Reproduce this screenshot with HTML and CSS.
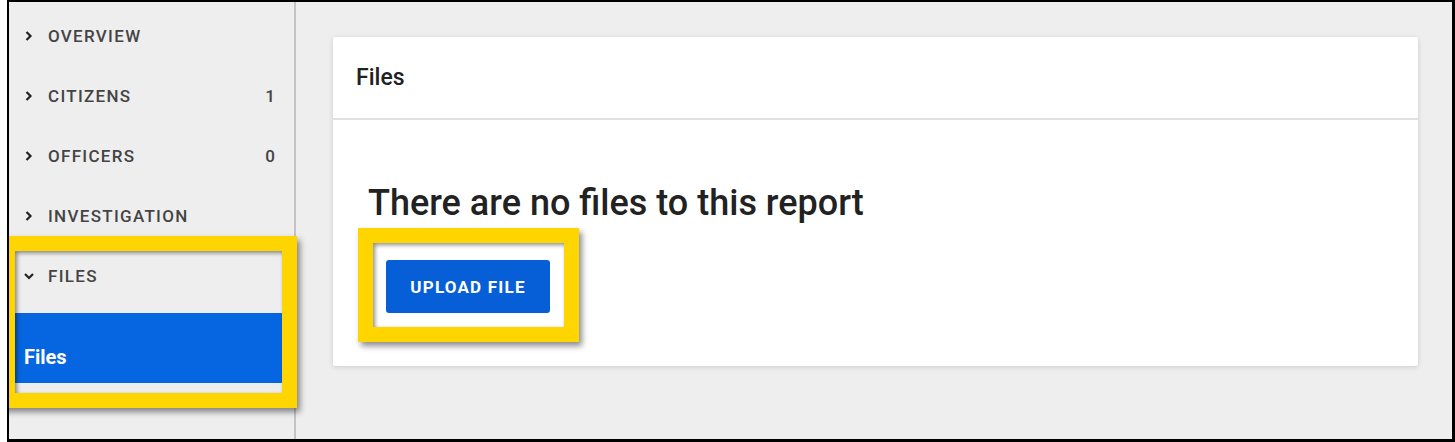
FILE: index.html
```html
<!DOCTYPE html>
<html>
<head>
    <title>Report Files</title>
    <link rel="stylesheet" href="styles.css">
</head>
<body>
    <div class="window">
        <div class="sidebar">
            <div class="nav-item">
                <svg class="chev" width="10" height="12" viewBox="0 0 10 12"><path d="M2.5 2L6.5 6L2.5 10" fill="none" stroke="#222" stroke-width="2.2"/></svg>
                <span class="nav-label">Overview</span>
            </div>
            <div class="nav-item">
                <svg class="chev" width="10" height="12" viewBox="0 0 10 12"><path d="M2.5 2L6.5 6L2.5 10" fill="none" stroke="#222" stroke-width="2.2"/></svg>
                <span class="nav-label">Citizens</span>
                <span class="nav-count">1</span>
            </div>
            <div class="nav-item">
                <svg class="chev" width="10" height="12" viewBox="0 0 10 12"><path d="M2.5 2L6.5 6L2.5 10" fill="none" stroke="#222" stroke-width="2.2"/></svg>
                <span class="nav-label">Officers</span>
                <span class="nav-count">0</span>
            </div>
            <div class="nav-item">
                <svg class="chev" width="10" height="12" viewBox="0 0 10 12"><path d="M2.5 2L6.5 6L2.5 10" fill="none" stroke="#222" stroke-width="2.2"/></svg>
                <span class="nav-label">Investigation</span>
            </div>
            <div class="nav-group">
                <div class="nav-item">
                    <svg class="chev" width="10" height="12" viewBox="0 0 10 12"><path d="M1 4L5 8L9 4" fill="none" stroke="#222" stroke-width="2.2"/></svg>
                    <span class="nav-label">Files</span>
                </div>
                <div class="sub-item active">Files</div>
                <!-- annotation highlight -->
                <div class="highlight side-mark"></div>
            </div>
        </div>

        <div class="main">
            <div class="card">
                <div class="card-header">Files</div>
                <div class="card-body">
                    <h2>There are no files to this report</h2>
                    <div class="upload-wrap">
                        <button type="button">Upload File</button>
                        <div class="highlight btn-mark"></div>
                    </div>
                </div>
            </div>
        </div>
    </div>
</body>
</html>
```
FILE: styles.css
```css
body {
    margin: 0;
    background: white;
    font-family: Roboto, "Liberation Sans", sans-serif;
}
.window {
    margin-left: 7px;
    height: 442px;
    box-sizing: border-box;
    border-style: solid;
    border-color: #000;
    border-width: 2px 3px 3px 2px;
    display: flex;
    background: #eeeeee;
    overflow: hidden;
}
.sidebar {
    width: 285px;
    border-right: 2px solid #c4c4c4;
    padding-top: 4px;
    flex-shrink: 0;
}
.nav-item {
    height: 60px;
    display: flex;
    align-items: center;
    padding: 0 19px 0 15px;
    color: #444;
    font-size: 17px;
    font-weight: 500;
    letter-spacing: 1.3px;
    text-transform: uppercase;
}
.chev {
    margin-right: 14px;
}
.nav-label {
    flex: 1;
}
.nav-count {
    letter-spacing: 0;
}
.nav-group {
    position: relative;
}
.sub-item {
    margin-top: 7px;
    padding: 32px 15px 14px;
    font-size: 20px;
    line-height: 24px;
    font-weight: 700;
}
.active {
    background: #0666e1;
    color: white;
}
.highlight {
    position: absolute;
    border: 15px solid #ffd500;
    box-shadow: 3px 4px 6px rgba(0,0,0,0.45), inset 2px 2px 4px rgba(0,0,0,0.45);
    pointer-events: none;
}
.side-mark {
    left: -9px;
    top: -10px;
    width: 267px;
    height: 142px;
}
.main {
    flex: 1;
    padding: 35px 34px 0 37px;
}
.card {
    background: white;
    border-radius: 2px;
    height: 329px;
    box-shadow: 0 1px 5px rgba(0,0,0,0.15);
}
.card-header {
    height: 83px;
    box-sizing: border-box;
    padding: 27px 23px 0;
    font-size: 23px;
    font-weight: 500;
    color: #212121;
    border-bottom: 2px solid #e0e0e0;
}
.card-body {
    padding: 63px 35px 0;
}
h2 {
    margin: 0;
    font-size: 36px;
    line-height: 40px;
    font-weight: 500;
    color: #222;
}
.upload-wrap {
    position: relative;
    margin: 37px 0 0 18px;
    width: 164px;
}
button {
    width: 164px;
    height: 53px;
    background: #065fd6;
    color: white;
    border: none;
    border-radius: 3px;
    font-family: Roboto, "Liberation Sans", sans-serif;
    font-size: 17px;
    font-weight: 700;
    letter-spacing: 1.2px;
    text-transform: uppercase;
    cursor: pointer;
}
.btn-mark {
    left: -28px;
    top: -32px;
    width: 191px;
    height: 84px;
}
```
